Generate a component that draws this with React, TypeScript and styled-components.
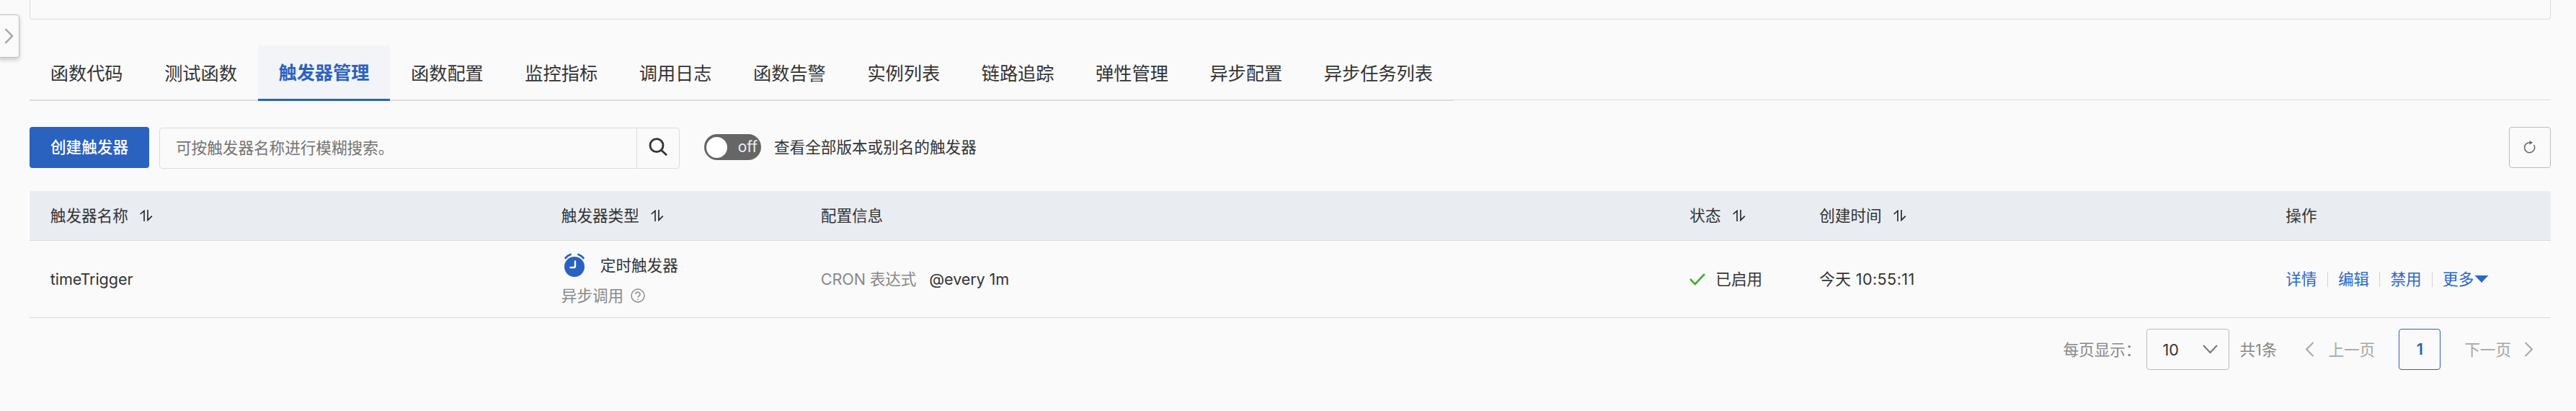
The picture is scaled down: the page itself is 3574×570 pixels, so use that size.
import React from 'react';
import styled, { createGlobalStyle } from 'styled-components';

const GlobalStyle = createGlobalStyle`
  *, *::before, *::after { box-sizing: border-box; }
  body {
    margin: 0;
    background: #fafafa;
    color: #333;
    font-family: Inter, "Noto Sans CJK SC", sans-serif;
    font-size: 21.6px;
    line-height: 32px;
    overflow: hidden;
  }
  button, input { font: inherit; color: inherit; margin: 0; }
  svg { display: block; flex: none; }
`;

const Page = styled.div`
  position: relative;
  width: 3574px;
  height: 570px;
  padding: 0 35px 0 41px;
`;

const PanelEdge = styled.div`
  height: 27px;
  border: 1px solid #dcdcdc;
  border-top: 0;
  border-radius: 0 0 4px 4px;
`;

const DrawerHandle = styled.button`
  position: absolute;
  left: -4px;
  top: 20px;
  width: 31px;
  height: 60px;
  padding: 0 0 0 9px;
  display: flex;
  align-items: center;
  background: #fafafa;
  border: 1px solid #bcbfc2;
  border-radius: 4px;
  box-shadow: 0 3px 6px rgba(0, 0, 0, 0.2);
`;

const TabBar = styled.nav`
  display: flex;
  height: 77px;
  margin-top: 36px;
  box-shadow: inset 0 -1px 0 #fafafa, inset 0 -2px 0 #dcdcdc;
`;

const Tab = styled.button<{ $active?: boolean }>`
  height: 77px;
  padding: 3px 28.8px 0;
  border: 0;
  border-bottom: ${p => (p.$active ? '3px solid #2a62bf' : '2px solid #dcdcdc')};
  background: ${p => (p.$active ? '#f2f4f7' : 'transparent')};
  color: ${p => (p.$active ? '#2a62bf' : '#333')};
  font-size: 25.2px;
  font-weight: ${p => (p.$active ? 600 : 400)};
  line-height: ${p => (p.$active ? 71 : 72)}px;
  white-space: nowrap;
`;

const Toolbar = styled.div`
  display: flex;
  align-items: center;
  height: 58px;
  margin-top: 35px;
`;

const PrimaryButton = styled.button`
  width: 166px;
  height: 57px;
  padding: 0;
  border: 0;
  border-radius: 4px;
  background: #2a62bf;
  color: #fff;
  font-weight: 500;
`;

const SearchBox = styled.div`
  display: flex;
  width: 722px;
  height: 57px;
  margin: 2px 0 0 14px;
  border: 1px solid #dcdcdc;
  border-radius: 4px;
`;

const SearchInput = styled.input`
  flex: 1;
  min-width: 0;
  padding: 0 0 0 22px;
  border: 0;
  outline: 0;
  background: transparent;
  &::placeholder { color: #737373; opacity: 1; }
`;

const SearchButton = styled.button`
  display: flex;
  align-items: center;
  justify-content: center;
  width: 59px;
  padding: 0 0 4px;
  border: 0;
  border-left: 1px solid #dcdcdc;
  background: transparent;
`;

const Switch = styled.button`
  display: flex;
  align-items: center;
  justify-content: space-between;
  width: 79px;
  height: 36px;
  margin: 0 18px 0 34px;
  padding: 0 5px 0 3px;
  border: 0;
  border-radius: 18px;
  background: #666;
  color: #eee;
  font-size: 21px;
  line-height: 36px;
`;

const Knob = styled.span`
  width: 29px;
  height: 29px;
  border-radius: 50%;
  background: #fff;
`;

const RefreshButton = styled.button`
  display: flex;
  align-items: center;
  justify-content: center;
  width: 58px;
  height: 57px;
  margin-left: auto;
  padding: 0;
  border: 1px solid #b9bcc1;
  border-radius: 4px;
  background: transparent;
`;

const Row = styled.div<{ $head?: boolean }>`
  display: grid;
  grid-template-columns: 709px 360px 1205.5px 180px 647px 1fr;
  height: ${p => (p.$head ? 69 : 107)}px;
  margin-top: ${p => (p.$head ? 32 : 0)}px;
  border-bottom: 1px solid #d9dbdd;
  background: ${p => (p.$head ? '#e9edf2' : 'transparent')};
`;

const Cell = styled.div<{ $gap?: number }>`
  display: flex;
  align-items: center;
  gap: ${p => p.$gap ?? 0}px;
  padding-left: 28.8px;
  white-space: nowrap;
`;

const Latin = styled.span`
  letter-spacing: -0.1px;
`;

const Time = styled.span`
  letter-spacing: 0.4px;
`;

const TypeCell = styled.div`
  display: flex;
  flex-direction: column;
  padding: 17px 0 0 28.8px;
  gap: 8px;
`;

const TypeLine = styled.div<{ $muted?: boolean }>`
  display: flex;
  align-items: center;
  height: 34px;
  gap: ${p => (p.$muted ? 10 : 22)}px;
  padding-left: ${p => (p.$muted ? 0 : 4)}px;
  color: ${p => (p.$muted ? '#888' : '#333')};

  > svg {
    margin-bottom: ${p => (p.$muted ? 0 : 2)}px;
  }
`;

const Muted = styled.span`
  color: #888;
  letter-spacing: -0.1px;
`;

const Action = styled.a`
  display: flex;
  align-items: center;
  gap: 1px;
  color: #2a68c8;
`;

const Divider = styled.i`
  width: 1px;
  height: 21px;
  margin: 0 14.4px 0 14px;
  background: #d0d2d5;
`;

const Pager = styled.footer`
  display: flex;
  align-items: center;
  justify-content: flex-end;
  height: 57px;
  margin-top: 15px;
  padding-right: 24px;
  color: #888;
  white-space: nowrap;
`;

const PageSize = styled.button`
  display: flex;
  align-items: center;
  justify-content: space-between;
  width: 115px;
  height: 57px;
  margin: 0 14px 0 8px;
  padding: 0 15px 0 21px;
  border: 1px solid #b9bcc1;
  border-radius: 4px;
  background: transparent;
  color: #333;
`;

const PageStep = styled.span<{ $next?: boolean }>`
  display: flex;
  align-items: center;
  gap: ${p => (p.$next ? 18 : 19)}px;
  margin-left: ${p => (p.$next ? 33 : 39)}px;
  color: #a6a6a6;
`;

const CurrentPage = styled.span`
  width: 58px;
  height: 57px;
  margin-left: 33px;
  border: 1px solid #2a62bf;
  border-radius: 4px;
  color: #2a62bf;
  font-weight: 600;
  line-height: 55px;
  text-align: center;
`;

const Chevron = ({ left, w = 13, h = 21, weight = 2 }: { left?: boolean; w?: number; h?: number; weight?: number }) => (
  <svg width={w} height={h} viewBox="0 0 13 21" preserveAspectRatio="none" fill="none" stroke="#a6a6a6" strokeWidth={weight}>
    <path d={left ? 'M11.5 1L2 10.5L11.5 20' : 'M1.5 1L11 10.5L1.5 20'} />
  </svg>
);

const SortIcon = () => (
  <svg width="18" height="16" viewBox="0 0 18 16" fill="none" stroke="#222" strokeWidth="1.6">
    <path d="M0.6 6L6 1.4V16M11 0V14.4L16.8 8.6" />
  </svg>
);

const AlarmIcon = () => (
  <svg width="28" height="33" viewBox="0 0 28 33" fill="none">
    <circle cx="14" cy="19" r="14" fill="#2a62bf" />
    <path d="M1.6 6.8Q4.4 3.4 8.4 2M26.4 6.8Q23.6 3.4 19.6 2" stroke="#2a62bf" strokeWidth="2.8" strokeLinecap="round" />
    <path d="M15 11.5V18Q15 20 13 20H8.5" stroke="#fff" strokeWidth="2.4" strokeLinecap="round" />
  </svg>
);

const tabs = ['函数代码', '测试函数', '触发器管理', '函数配置', '监控指标', '调用日志', '函数告警', '实例列表', '链路追踪', '弹性管理', '异步配置', '异步任务列表'];

const columns = [
  { title: '触发器名称', sortable: true },
  { title: '触发器类型', sortable: true },
  { title: '配置信息' },
  { title: '状态', sortable: true },
  { title: '创建时间', sortable: true },
  { title: '操作' },
];

export default function App() {
  return (
    <Page>
      <GlobalStyle />
      <PanelEdge />
      <DrawerHandle>
        <Chevron w={13} h={22} weight={2.4} />
      </DrawerHandle>
      <TabBar>
        {tabs.map(t => (
          <Tab key={t} $active={t === '触发器管理'}>{t}</Tab>
        ))}
      </TabBar>
      <Toolbar>
        <PrimaryButton>创建触发器</PrimaryButton>
        <SearchBox>
          <SearchInput placeholder="可按触发器名称进行模糊搜索。" />
          <SearchButton>
            <svg width="26" height="25" viewBox="0 0 26 25" fill="none" stroke="#333" strokeWidth="2.8">
              <circle cx="11" cy="10.7" r="9" />
              <path d="M17.3 17L25 24.2" />
            </svg>
          </SearchButton>
        </SearchBox>
        <Switch>
          <Knob />
          off
        </Switch>
        <span>查看全部版本或别名的触发器</span>
        <RefreshButton>
          <svg width="18" height="18" viewBox="0 0 18 18" fill="none" stroke="#666" strokeWidth="1.5">
            <path d="M14.6 6A7 7 0 1 1 9.5 2.7" />
            <path d="M8.6 0L13 2.8L8.6 5.8Z" fill="#666" stroke="none" />
          </svg>
        </RefreshButton>
      </Toolbar>
      <Row $head>
        {columns.map(c => (
          <Cell key={c.title} $gap={16}>
            {c.title}
            {c.sortable && <SortIcon />}
          </Cell>
        ))}
      </Row>
      <Row>
        <Cell>
          <Latin>timeTrigger</Latin>
        </Cell>
        <TypeCell>
          <TypeLine>
            <AlarmIcon />
            定时触发器
          </TypeLine>
          <TypeLine $muted>
            异步调用
            <svg width="20" height="20" viewBox="0 0 20 20" fill="none" stroke="#888" strokeWidth="1.4">
              <circle cx="10" cy="10" r="9" />
              <path d="M7 8a3 3 0 1 1 4.4 2.6Q10 11.3 10 12.6M10 14.2v1.8" />
            </svg>
          </TypeLine>
        </TypeCell>
        <Cell $gap={18}>
          <Muted>CRON 表达式</Muted>
          <Latin>@every 1m</Latin>
        </Cell>
        <Cell $gap={14}>
          <svg width="22" height="17" viewBox="0 0 22 17" fill="none" stroke="#44ad3a" strokeWidth="2.6">
            <path d="M1 8L7.8 15L21 1" />
          </svg>
          已启用
        </Cell>
        <Cell>
          <Time>今天 10:55:11</Time>
        </Cell>
        <Cell>
          <Action>详情</Action>
          <Divider />
          <Action>编辑</Action>
          <Divider />
          <Action>禁用</Action>
          <Divider />
          <Action>
            更多
            <svg width="20" height="10" viewBox="0 0 20 10" fill="#2a68c8">
              <path d="M0.5 0H19.5L10 10Z" />
            </svg>
          </Action>
        </Cell>
      </Row>
      <Pager>
        <span>每页显示：</span>
        <PageSize>
          10
          <svg width="21" height="13" viewBox="0 0 21 13" fill="none" stroke="#777" strokeWidth="2">
            <path d="M1 1L10.5 11L20 1" />
          </svg>
        </PageSize>
        <span>共1条</span>
        <PageStep>
          <Chevron left />
          上一页
        </PageStep>
        <CurrentPage>1</CurrentPage>
        <PageStep $next>
          下一页
          <Chevron />
        </PageStep>
      </Pager>
    </Page>
  );
}
